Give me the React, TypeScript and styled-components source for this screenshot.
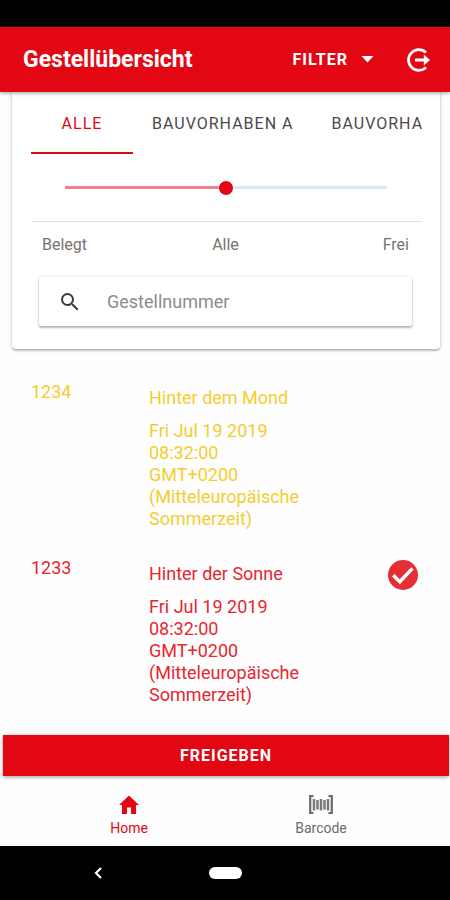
import React, { useState } from 'react';
import styled, { createGlobalStyle } from 'styled-components';

const RED = '#e30613';

const GlobalStyle = createGlobalStyle`
  *, *::before, *::after { box-sizing: border-box; }
  body {
    margin: 0;
    background: #fff;
    font-family: Roboto, "Liberation Sans", sans-serif;
  }
  button, input { font-family: inherit; }
  button { border: 0; padding: 0; background: none; cursor: pointer; }
  h1, h2, p { margin: 0; font-weight: 400; }
`;

const Screen = styled.div`
  display: flex;
  flex-direction: column;
  min-height: 100vh;
  background: #fefefe;
`;

const StatusBar = styled.div`
  height: 27px;
  background: #000;
`;

const Header = styled.header`
  position: relative;
  z-index: 1;
  display: flex;
  align-items: center;
  height: 65px;
  padding: 0 18px 0 23px;
  background: ${RED};
  color: #fff;
  box-shadow: 0 1px 4px rgba(0, 0, 0, 0.4);
`;

const Title = styled.h1`
  flex: 1;
  font-size: 23px;
  font-weight: 700;
`;

const FilterButton = styled.button`
  display: flex;
  align-items: center;
  gap: 13px;
  color: #fff;
  font-size: 16px;
  font-weight: 700;
  letter-spacing: 1px;
`;

const IconButton = styled.button`
  display: flex;
  margin-left: 32px;
  color: #fff;
`;

const Main = styled.main`
  flex: 1;
`;

const Card = styled.section`
  margin: 0 10px 0 12px;
  padding: 0 18px 23px 19px;
  border-radius: 0 0 4px 4px;
  background: #fff;
  box-shadow: 0 2px 2px rgba(0, 0, 0, 0.22), 0 0 4px rgba(0, 0, 0, 0.16);
`;

const Tabs = styled.div`
  display: flex;
  overflow: hidden;
`;

const Tab = styled.button<{ $active: boolean }>`
  flex: none;
  min-width: 102px;
  height: 62px;
  padding: 2px 19px 0;
  border-bottom: 2px solid ${(p) => (p.$active ? RED : 'transparent')};
  color: ${(p) => (p.$active ? RED : '#4a4a4a')};
  font-size: 16px;
  font-weight: 400;
  letter-spacing: 1px;
  white-space: nowrap;
`;

const SliderRow = styled.div`
  display: flex;
  align-items: center;
  height: 68px;
  padding: 0 35px 0 34px;
  border-bottom: 1px solid #e2e2e2;
`;

const Slider = styled.input`
  appearance: none;
  width: 100%;
  height: 14px;
  margin: 0;
  background: linear-gradient(
      to right,
      #ee8286 var(--fill),
      #dbe5fb var(--fill)
    )
    center / 100% 3px no-repeat;

  &::-webkit-slider-thumb {
    appearance: none;
    width: 14px;
    height: 14px;
    border-radius: 50%;
    background: ${RED};
  }
`;

const ScaleLabels = styled.div`
  display: grid;
  grid-template-columns: 1fr auto 1fr;
  padding: 13px 13px 0 11px;
  color: #747474;
  font-size: 16px;
  line-height: 20px;

  span:last-child { text-align: right; }
`;

const SearchBox = styled.label`
  display: flex;
  align-items: center;
  gap: 25px;
  height: 49px;
  margin: 22px 10px 0 8px;
  padding: 0 19px;
  border-radius: 2px;
  background: #fff;
  box-shadow: 0 2px 2px rgba(0, 0, 0, 0.25), 0 0 3px rgba(0, 0, 0, 0.16);
`;

const SearchInput = styled.input`
  flex: 1;
  min-width: 0;
  border: 0;
  outline: 0;
  padding: 0;
  background: transparent;
  color: #444;
  font-size: 18px;

  &::placeholder { color: #8c8c8c; opacity: 1; }
`;

const List = styled.div`
  padding-top: 32px;
`;

const Row = styled.article<{ $color: string }>`
  display: grid;
  grid-template-columns: 118px minmax(0, 160px) 1fr;
  width: 100%;
  min-height: 176px;
  padding: 0 29px 0 31px;
  color: ${(p) => p.$color};
  font-size: 18px;
  line-height: 22px;
`;

const Place = styled.div`
  display: flex;
  flex-direction: column;
  gap: 11px;
  padding-top: 6px;
`;

const Mark = styled.div`
  display: flex;
  justify-content: flex-end;
`;

const ReleaseButton = styled.button`
  height: 41px;
  margin: 0 1px 0 3px;
  background: ${RED};
  box-shadow: 0 1px 4px rgba(0, 0, 0, 0.4);
  color: #fff;
  font-size: 16px;
  font-weight: 700;
  letter-spacing: 1px;
`;

const TabBar = styled.nav`
  display: flex;
  justify-content: center;
  height: 70px;
`;

const NavLink = styled.a<{ $active?: boolean }>`
  display: flex;
  flex-direction: column;
  align-items: center;
  flex: 0 1 192px;
  gap: 4px;
  padding-top: 16px;
  color: ${(p) => (p.$active ? RED : '#6b6b6b')};
  font-size: 14px;
  line-height: 16px;
  text-decoration: none;
`;

const SystemBar = styled.div`
  display: grid;
  grid-template-columns: 1fr auto 1fr;
  align-items: center;
  height: 54px;
  background: #000;
`;

const BackButton = styled.button`
  display: flex;
  justify-self: center;
  padding-right: 12px;
  color: #fff;
`;

const HomePill = styled.button`
  width: 33px;
  height: 12px;
  border-radius: 6px;
  background: #fff;
`;

const CaretIcon = () => (
  <svg width="13" height="7" viewBox="0 0 13 7" aria-hidden="true">
    <path d="M0.500 0h12L6.500 6.500z" fill="currentColor" />
  </svg>
);

const LogoutIcon = () => (
  <svg width="26" height="26" viewBox="0 0 26 26" fill="none" aria-hidden="true">
    <path
      d="M20 5.600A10.300 10.300 0 1 0 20 20.400"
      stroke="currentColor"
      strokeWidth="2.700"
    />
    <path d="M9 13h11" stroke="currentColor" strokeWidth="3" />
    <path d="M17.800 7.500L24 13l-6.200 5.500z" fill="currentColor" />
  </svg>
);

const SearchIcon = () => (
  <svg width="24" height="24" viewBox="0 0 24 24" aria-hidden="true">
    <path
      fill="#3c3c3c"
      d="M15.500 14h-.79l-.28-.27A6.471 6.471 0 0 0 16 9.500 6.500 6.500 0 1 0 9.500 16c1.610 0 3.090-.59 4.230-1.570l.27.28v.79l5 4.990L20.490 19l-4.990-5zm-6 0C7.010 14 5 11.990 5 9.500S7.010 5 9.500 5 14 7.010 14 9.500 11.990 14 9.500 14z"
    />
  </svg>
);

const CheckIcon = () => (
  <svg width="36" height="36" viewBox="0 0 24 24" role="img" aria-label="Ausgewählt">
    <circle cx="12" cy="12" r="10" fill="#e62e35" />
    <path d="M5.500 12.200L9.900 16.500 18.300 7.600" fill="none" stroke="#fff" strokeWidth="2.300" />
  </svg>
);

const HomeIcon = () => (
  <svg width="24" height="24" viewBox="0 0 24 24" aria-hidden="true">
    <path fill="currentColor" d="M10 22v-6.500h4V22h5v-9h3L12 3.500 2 13h3v9z" />
  </svg>
);

const BarcodeIcon = () => (
  <svg width="26" height="24" viewBox="0 0 26 24" fill="none" stroke="currentColor" aria-hidden="true">
    <path d="M5.500 4H2.200v17h3.300M20.500 4h3.300v17h-3.300" strokeWidth="2.200" />
    <path
      d="M6 7v11.500M9.500 8v9.500M13 7v11.500M16.500 8v9.500M20 7v11.500"
      strokeWidth="2.500"
      opacity="0.900"
    />
  </svg>
);

const BackIcon = () => (
  <svg width="8" height="12" viewBox="0 0 8 12" fill="none" aria-hidden="true">
    <path d="M7 1L2 6l5 5" stroke="currentColor" strokeWidth="2.200" />
  </svg>
);

const projects = ['ALLE', 'BAUVORHABEN A', 'BAUVORHABEN B'];

const racks = [
  { id: '1234', place: 'Hinter dem Mond', color: '#f4cd30', selected: false },
  { id: '1233', place: 'Hinter der Sonne', color: '#e62630', selected: true },
];

const timestamp = 'Fri Jul 19 2019 08:32:00 GMT+0200 (Mitteleuropäische Sommerzeit)';

export default function App() {
  const [project, setProject] = useState(0);
  const [level, setLevel] = useState(50);

  return (
    <>
      <GlobalStyle />
      <Screen>
        <StatusBar />
        <Header>
          <Title>Gestellübersicht</Title>
          <FilterButton type="button">
            FILTER
            <CaretIcon />
          </FilterButton>
          <IconButton type="button" aria-label="Abmelden">
            <LogoutIcon />
          </IconButton>
        </Header>
        <Main>
          <Card>
            <Tabs role="tablist">
              {projects.map((name, i) => (
                <Tab
                  key={name}
                  type="button"
                  role="tab"
                  aria-selected={i === project}
                  $active={i === project}
                  onClick={() => setProject(i)}
                >
                  {name}
                </Tab>
              ))}
            </Tabs>
            <SliderRow>
              <Slider
                type="range"
                min={0}
                max={100}
                step={50}
                value={level}
                aria-label="Belegung"
                style={{ '--fill': `${level}%` } as React.CSSProperties}
                onChange={(e) => setLevel(Number(e.target.value))}
              />
            </SliderRow>
            <ScaleLabels>
              <span>Belegt</span>
              <span>Alle</span>
              <span>Frei</span>
            </ScaleLabels>
            <SearchBox>
              <SearchIcon />
              <SearchInput type="text" placeholder="Gestellnummer" aria-label="Gestellnummer" />
            </SearchBox>
          </Card>
          <List>
            {racks.map((rack) => (
              <Row key={rack.id} $color={rack.color}>
                <p>{rack.id}</p>
                <Place>
                  <p>{rack.place}</p>
                  <p>{timestamp}</p>
                </Place>
                <Mark>{rack.selected && <CheckIcon />}</Mark>
              </Row>
            ))}
          </List>
        </Main>
        <ReleaseButton type="button">FREIGEBEN</ReleaseButton>
        <TabBar>
          <NavLink href="#home" $active>
            <HomeIcon />
            Home
          </NavLink>
          <NavLink href="#barcode">
            <BarcodeIcon />
            Barcode
          </NavLink>
        </TabBar>
        <SystemBar>
          <BackButton type="button" aria-label="Zurück">
            <BackIcon />
          </BackButton>
          <HomePill type="button" aria-label="Startbildschirm" />
        </SystemBar>
      </Screen>
    </>
  );
}
